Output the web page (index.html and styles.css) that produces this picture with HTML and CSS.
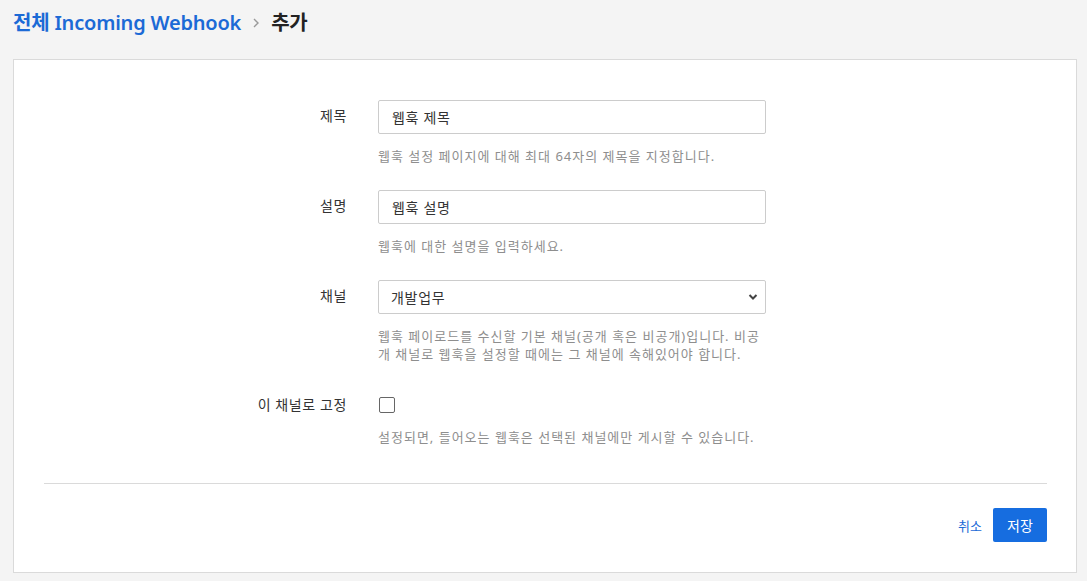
FILE: index.html
```html
<!DOCTYPE html>
<html lang="ko">
<head>
<meta charset="utf-8">
<title>Incoming Webhook 추가</title>
<link rel="stylesheet" href="styles.css">
</head>
<body>
<div class="page">
  <h1 class="crumbs">
    <a class="crumb-link" href="#">전체 Incoming Webhook</a>
    <span class="crumb-sep">
      <svg width="10" height="12" viewBox="0 0 10 12"><path d="M3 2 L7 6 L3 10" fill="none" stroke="#999" stroke-width="1.4"/></svg>
    </span>
    <span class="crumb-current">추가</span>
  </h1>
  <div class="card">
    <form class="form">
      <div class="row">
        <label class="label" for="t">제목</label>
        <div class="field">
          <input id="t" class="input" type="text" value="웹훅 제목">
          <p class="help">웹훅 설정 페이지에 대해 최대 64자의 제목을 지정합니다.</p>
        </div>
      </div>
      <div class="row">
        <label class="label" for="d">설명</label>
        <div class="field">
          <input id="d" class="input" type="text" value="웹훅 설명">
          <p class="help">웹훅에 대한 설명을 입력하세요.</p>
        </div>
      </div>
      <div class="row">
        <label class="label" for="c">채널</label>
        <div class="field">
          <div class="select-wrap">
            <select id="c" class="input select"><option>개발업무</option></select>
            <svg class="chev" width="10" height="8" viewBox="0 0 10 8"><path d="M1.5 2 L5 5.5 L8.5 2" fill="none" stroke="#444" stroke-width="2"/></svg>
          </div>
          <p class="help">웹훅 페이로드를 수신할 기본 채널(공개 혹은 비공개)입니다. 비공개 채널로 웹훅을 설정할 때에는 그 채널에 속해있어야 합니다.</p>
        </div>
      </div>
      <div class="row">
        <label class="label label-check" for="l">이 채널로 고정</label>
        <div class="field">
          <div class="check-row"><input id="l" class="check" type="checkbox"></div>
          <p class="help help-check">설정되면, 들어오는 웹훅은 선택된 채널에만 게시할 수 있습니다.</p>
        </div>
      </div>
    </form>
    <div class="footer">
      <a class="cancel" href="#">취소</a>
      <button class="save" type="button">저장</button>
    </div>
  </div>
</div>
</body>
</html>
```
FILE: styles.css
```css
* { box-sizing: border-box; }
html, body { margin: 0; padding: 0; }
body {
  background: #f4f4f4;
  font-family: "Noto Sans", "Noto Sans CJK KR", sans-serif;
  color: #333;
}
.page { padding: 0 10px 0 13px; }
.crumbs {
  margin: 0;
  height: 59px;
  display: flex;
  align-items: center;
  padding-bottom: 16px;
  font-size: 20px;
  font-weight: 600;
  letter-spacing: -0.2px;
}
.crumb-link { color: #1c6ad6; text-decoration: none; }
.crumb-sep { display: flex; align-items: center; margin: 2px 10px 0 10px; }
.crumb-current { color: #222; }
.card {
  background: #fff;
  border: 1px solid #dadada;
  height: 514px;
  padding: 40px 29px 0 30px;
}
.form { display: flex; flex-direction: column; gap: 25px; }
.row { display: flex; }
.label {
  width: 303px;
  text-align: right;
  font-size: 14px;
  padding-top: 7px;
  line-height: 18px;
  letter-spacing: 0.6px;
  color: #333;
  flex: none;
}
.label-check { padding-top: 8px; }
.field { margin-left: 31px; width: 388px; }
.input {
  display: block;
  width: 388px;
  height: 34px;
  border: 1px solid #ccc;
  border-radius: 2px;
  padding: 0 13px;
  font-family: inherit;
  font-size: 14px;
  letter-spacing: 0.7px;
  color: #333;
  background: #fff;
  outline: none;
}
.select-wrap { position: relative; }
.select { appearance: none; -webkit-appearance: none; padding-left: 12px; }
.chev { position: absolute; right: 8px; top: 13px; pointer-events: none; }
.help {
  margin: 13px 0 0;
  font-size: 13px;
  line-height: 18px;
  letter-spacing: 1px;
  word-break: break-all;
  color: #8e8e8e;
}
.help-check { margin-top: 10px; }
.check-row { height: 30px; display: flex; align-items: center; padding: 4px 0 0 1px; }
.check {
  appearance: none;
  -webkit-appearance: none;
  margin: 0;
  width: 16px;
  height: 16px;
  border: 1px solid #666;
  border-radius: 2px;
  background: #fff;
}
.footer {
  margin-top: 37px;
  border-top: 1px solid #dadada;
  padding-top: 24px;
  display: flex;
  justify-content: flex-end;
  align-items: center;
  gap: 11px;
}
.cancel { color: #1c6ad6; font-size: 13px; text-decoration: none; }
.save {
  width: 54px;
  height: 34px;
  border: none;
  border-radius: 2px;
  background: #166de0;
  color: #fff;
  font-family: inherit;
  font-size: 14px;
}
```
